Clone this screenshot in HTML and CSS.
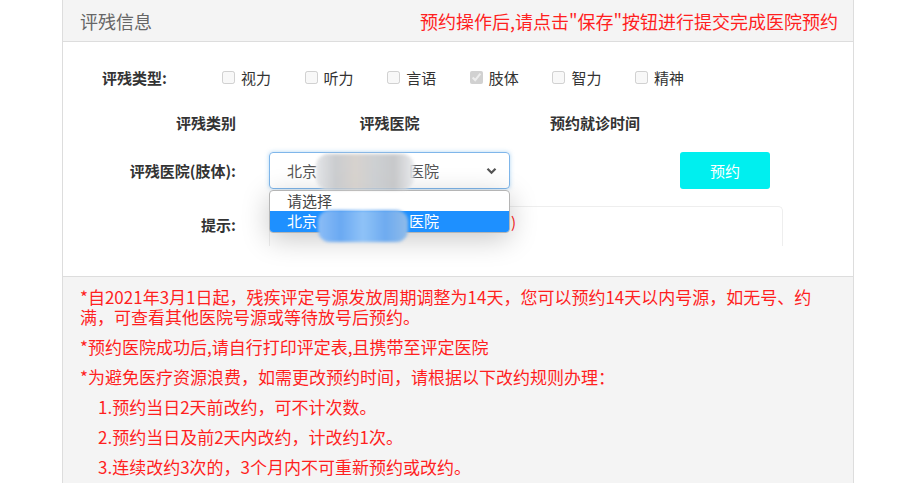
FILE: index.html
```html
<!DOCTYPE html>
<html lang="zh-CN">
<head>
    <meta charset="UTF-8">
    <title>评残预约</title>
    <link rel="stylesheet" href="styles.css">
</head>
<body>
    <div class="panel">
        <div class="panel-head">
            <span class="panel-title">评残信息</span>
            <span class="panel-tip">预约操作后,请点击"保存"按钮进行提交完成医院预约</span>
        </div>

        <div class="panel-body">
            <div class="type-row">
                <span class="type-label">评残类型:</span>
                <label class="check-item"><input type="checkbox" disabled>视力</label>
                <label class="check-item"><input type="checkbox" disabled>听力</label>
                <label class="check-item"><input type="checkbox" disabled>言语</label>
                <label class="check-item"><input type="checkbox" disabled checked>肢体</label>
                <label class="check-item"><input type="checkbox" disabled>智力</label>
                <label class="check-item"><input type="checkbox" disabled>精神</label>
            </div>

            <div class="book-row head-row">
                <div class="col-label">评残类别</div>
                <div class="col-hospital">评残医院</div>
                <div class="col-time">预约就诊时间</div>
            </div>

            <div class="book-row select-row">
                <div class="col-label">评残医院(肢体):</div>
                <div class="col-hospital select-wrap">
                    <div class="select-box">
                        <span>北京</span><span class="mask"></span><span>医院</span>
                        <svg class="select-arrow" width="11" height="8" viewBox="0 0 11 8"><path d="M1.5 1.8 L5.5 5.8 L9.5 1.8" fill="none" stroke="#555" stroke-width="2.2"/></svg>
                    </div>
                    <span class="blur blur-gray"></span>
                    <ul class="select-list">
                        <li>请选择</li>
                        <li class="active">北京<span class="mask"></span>医院</li>
                    </ul>
                    <span class="blur blur-blue"></span>
                </div>
                <div class="col-time"></div>
                <button class="btn-book">预约</button>
            </div>

            <div class="book-row hint-row">
                <div class="col-label">提示:</div>
                <div class="hint-box">(请选择评残医院及预约就诊时间)</div>
            </div>
        </div>

        <div class="notice">
            <p>*自2021年3月1日起，残疾评定号源发放周期调整为14天，您可以预约14天以内号源，如无号、约满，可查看其他医院号源或等待放号后预约。</p>
            <p>*预约医院成功后,请自行打印评定表,且携带至评定医院</p>
            <p>*为避免医疗资源浪费，如需更改预约时间，请根据以下改约规则办理：</p>
            <p class="rule">1.预约当日2天前改约，可不计次数。</p>
            <p class="rule">2.预约当日及前2天内改约，计改约1次。</p>
            <p class="rule">3.连续改约3次的，3个月内不可重新预约或改约。</p>
        </div>
    </div>
</body>
</html>
```

FILE: styles.css
```css
* {
    margin: 0;
    padding: 0;
    box-sizing: border-box;
    font-family: "Noto Sans CJK SC", "Liberation Sans", sans-serif;
}

body {
    background: #fff;
    color: #333;
}

.panel {
    width: 792px;
    margin-left: 62px;
    border: 1px solid #ddd;
    border-top: none;
    border-bottom: none;
}

.panel-head {
    height: 42px;
    display: flex;
    align-items: center;
    justify-content: space-between;
    padding: 0 15px 0 17px;
    background: #f4f4f4;
    border-bottom: 1px solid #ddd;
    font-size: 18px;
}

.panel-title {
    color: #666;
}

.panel-tip {
    color: #ff1f1f;
}

.panel-body {
    height: 234px;
    padding-top: 20px;
    background: #fff;
    font-size: 15px;
}

.type-row {
    display: flex;
    align-items: center;
    height: 30px;
    padding-left: 39px;
}

.type-label {
    width: 120px;
    font-weight: 700;
}

.check-item {
    width: 82.6px;
    display: flex;
    align-items: center;
    color: #333;
}

.check-item input {
    width: 13px;
    height: 13px;
    margin: 0 6px 0 0;
}

.book-row {
    display: flex;
    align-items: center;
}

.head-row {
    height: 30px;
    margin-top: 15px;
    font-weight: 700;
}

.select-row {
    height: 37px;
    margin-top: 15px;
}

.hint-row {
    height: 40px;
    margin-top: 17px;
    align-items: flex-start;
}

.col-label {
    width: 206px;
    padding-right: 33px;
    text-align: right;
    font-weight: 700;
}

.hint-row .col-label {
    line-height: 38px;
}

.col-hospital {
    width: 241px;
    text-align: center;
}

.col-time {
    width: 170px;
    text-align: center;
}

.select-wrap {
    position: relative;
    text-align: left;
}

.select-box {
    height: 37px;
    display: flex;
    align-items: center;
    padding: 0 12px 0 17px;
    border: 1px solid #7fb6ea;
    border-radius: 4px;
    box-shadow: 0 0 4px rgba(102, 175, 233, 0.5);
    color: #555;
}

.mask {
    display: inline-block;
    width: 92px;
}

.select-arrow {
    margin-left: auto;
}

.select-list {
    position: absolute;
    top: 38px;
    left: 0;
    width: 241px;
    list-style: none;
    background: #fff;
    border: 1px solid #b5b5b5;
    border-radius: 4px;
    overflow: hidden;
    box-shadow: 0 6px 28px rgba(0, 0, 0, 0.22);
    z-index: 2;
}

.select-list li {
    height: 20px;
    line-height: 20px;
    padding-left: 17px;
    color: #444;
}

.select-list li.active {
    height: 21px;
    background: #1e90ff;
    color: #fff;
}

.blur {
    position: absolute;
    border-radius: 12px;
    filter: blur(1.5px);
    z-index: 3;
}

.blur-gray {
    left: 47px;
    top: 2px;
    width: 98px;
    height: 36px;
    background: linear-gradient(90deg, #e1e3e6 0%, #c5c7ca 20%, #d3cec9 40%, #c8cbce 60%, #c2c3c5 80%, #e6e8eb 100%);
    opacity: 0.9;
}

.blur-blue {
    left: 49px;
    top: 58px;
    width: 90px;
    height: 32px;
    background: linear-gradient(90deg, #8cbdf6 0%, #6aa9f2 25%, #8fc2f7 50%, #6eabf0 75%, #8fbbe9 100%);
}

.btn-book {
    width: 90px;
    height: 37px;
    border: none;
    border-radius: 3px;
    background: #00efef;
    color: #fff;
    font-size: 15px;
}

.hint-box {
    width: 514px;
    height: 40px;
    line-height: 30px;
    padding-left: 26px;
    border: 1px solid #eee;
    border-bottom: none;
    border-radius: 5px 5px 0 0;
    color: #ff1f1f;
}

.notice {
    height: 207px;
    padding: 10px 20px 0 17px;
    background: #f4f4f4;
    border-top: 1px solid #ddd;
    color: #ff1f1f;
    font-size: 17px;
}

.notice p {
    line-height: 20px;
    margin-bottom: 10px;
}

.notice p.rule {
    padding-left: 18px;
}
```
